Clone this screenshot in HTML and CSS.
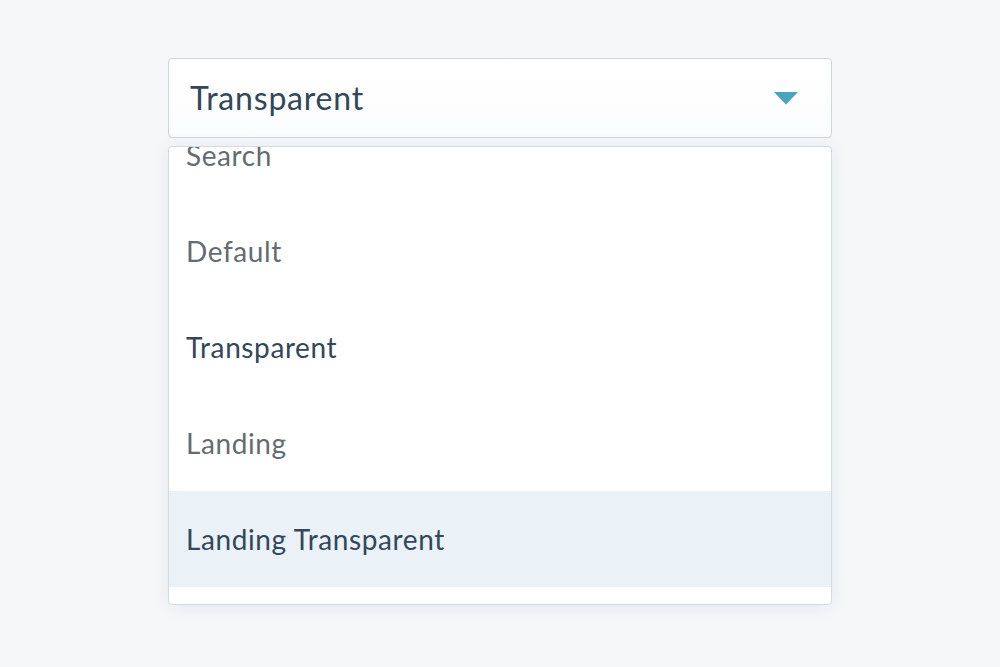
FILE: index.html
```html
<!DOCTYPE html>
<html>
<head>
<meta charset="utf-8">
<link rel="stylesheet" href="styles.css">
</head>
<body>
<div class="wrap">
  <div class="select">
    <span class="select-value">Transparent</span>
    <svg class="caret" width="24" height="13" viewBox="0 0 24 13"><path d="M0 0 H24 L12 12.5 Z" fill="#4ba3bd"/></svg>
  </div>
  <div class="menu">
    <ul class="list">
      <li class="opt">Search</li>
      <li class="opt">Default</li>
      <li class="opt selected">Transparent</li>
      <li class="opt">Landing</li>
      <li class="opt hover">Landing Transparent</li>
    </ul>
  </div>
</div>
</body>
</html>
```
FILE: styles.css
```css
html, body { margin: 0; padding: 0; }
body {
  background: #f5f7f9;
  font-family: "Lato", "Noto Sans", sans-serif;
  width: 1000px;
  height: 667px;
  overflow: hidden;
}
.wrap {
  width: 664px;
  margin: 0 auto;
  padding-top: 58px;
}
.select {
  box-sizing: border-box;
  height: 80px;
  border: 1px solid #cfd7df;
  border-radius: 4px;
  background: linear-gradient(#ffffff, #fbfcfd);
  display: flex;
  align-items: center;
  justify-content: space-between;
  padding: 0 33px 0 21px;
}
.select-value {
  font-size: 32px;
  letter-spacing: 0.8px;
  color: #33475b;
  margin-top: -2px;
}
.caret { display: block; margin-top: 1px; }
.menu {
  box-sizing: border-box;
  margin-top: 8px;
  height: 459px;
  border: 1px solid #d2dae2;
  border-radius: 4px;
  background: #fff;
  overflow: hidden;
  box-shadow: 0 2px 18px rgba(40, 60, 80, 0.08);
}
.list {
  list-style: none;
  margin: -40px 0 0;
  padding: 0;
}
.opt {
  height: 96px;
  display: flex;
  align-items: center;
  padding-left: 17px;
  font-size: 28px;
  letter-spacing: 0.6px;
  color: #646b72;
}
.opt.selected { color: #33475b; }
.opt.hover { background: #eaf1f7; color: #33475b; }
```
